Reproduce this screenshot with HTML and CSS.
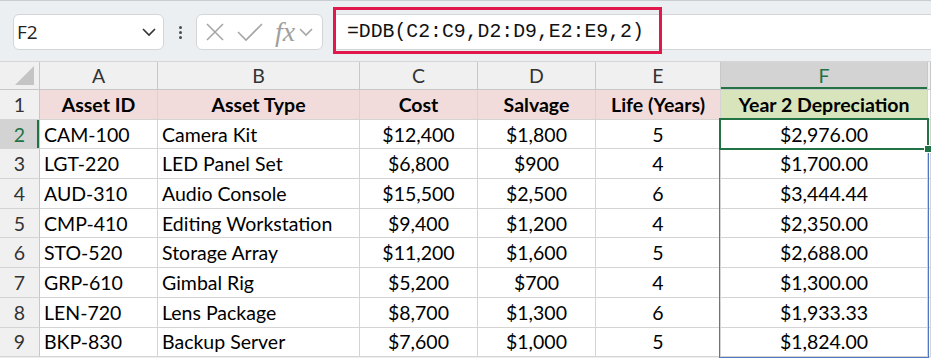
FILE: index.html
```html
<!DOCTYPE html>
<html lang="en">
<head>
  <meta charset="UTF-8">
  <meta name="viewport" content="width=device-width, initial-scale=1.0">
  <title>Asset Depreciation</title>
  <link rel="stylesheet" href="styles.css">
</head>
<body>

<div class="toolbar">
  <div class="name-box">
    <span>F2</span>
    <svg class="chevron" width="16" height="10" viewBox="0 0 16 10"><path d="M2 2 L8 8 L14 2" /></svg>
  </div>
  <div class="dots"><i></i><i></i><i></i></div>
  <div class="fx-box">
    <svg class="icon" width="20" height="20" viewBox="0 0 20 20"><path d="M2 2 L18 18 M18 2 L2 18" /></svg>
    <svg class="icon" width="26" height="20" viewBox="0 0 26 20"><path d="M1 10 L9 18 L25 2" /></svg>
    <span class="fx">fx</span>
    <svg class="icon small" width="14" height="9" viewBox="0 0 14 9"><path d="M1 1 L7 7 L13 1" /></svg>
  </div>
  <div class="formula">
    <span class="formula-text">=DDB(C2:C9,D2:D9,E2:E9,2)</span>
    <div class="highlight"></div>
  </div>
</div>

<div class="sheet">
  <!-- column headers -->
  <div class="hd corner">
    <svg width="20" height="20" viewBox="0 0 20 20"><path d="M0 19 L19 19 L19 0 Z" /></svg>
  </div>
  <div class="hd">A</div>
  <div class="hd">B</div>
  <div class="hd">C</div>
  <div class="hd">D</div>
  <div class="hd">E</div>
  <div class="hd active-col">F</div>
  <div class="hd"></div>

  <!-- row 1 -->
  <div class="rh">1</div>
  <div class="c title">Asset ID</div>
  <div class="c title">Asset Type</div>
  <div class="c title">Cost</div>
  <div class="c title">Salvage</div>
  <div class="c title">Life (Years)</div>
  <div class="c title result">Year 2 Depreciation</div>
  <div class="c"></div>

  <div class="rh active-row">2</div>
  <div class="c l">CAM-100</div>
  <div class="c l">Camera Kit</div>
  <div class="c">$12,400</div>
  <div class="c">$1,800</div>
  <div class="c">5</div>
  <div class="c">$2,976.00</div>
  <div class="c"></div>

  <div class="rh">3</div>
  <div class="c l">LGT-220</div>
  <div class="c l">LED Panel Set</div>
  <div class="c">$6,800</div>
  <div class="c">$900</div>
  <div class="c">4</div>
  <div class="c">$1,700.00</div>
  <div class="c"></div>

  <div class="rh">4</div>
  <div class="c l">AUD-310</div>
  <div class="c l">Audio Console</div>
  <div class="c">$15,500</div>
  <div class="c">$2,500</div>
  <div class="c">6</div>
  <div class="c">$3,444.44</div>
  <div class="c"></div>

  <div class="rh">5</div>
  <div class="c l">CMP-410</div>
  <div class="c l">Editing Workstation</div>
  <div class="c">$9,400</div>
  <div class="c">$1,200</div>
  <div class="c">4</div>
  <div class="c">$2,350.00</div>
  <div class="c"></div>

  <div class="rh">6</div>
  <div class="c l">STO-520</div>
  <div class="c l">Storage Array</div>
  <div class="c">$11,200</div>
  <div class="c">$1,600</div>
  <div class="c">5</div>
  <div class="c">$2,688.00</div>
  <div class="c"></div>

  <div class="rh">7</div>
  <div class="c l">GRP-610</div>
  <div class="c l">Gimbal Rig</div>
  <div class="c">$5,200</div>
  <div class="c">$700</div>
  <div class="c">4</div>
  <div class="c">$1,300.00</div>
  <div class="c"></div>

  <div class="rh">8</div>
  <div class="c l">LEN-720</div>
  <div class="c l">Lens Package</div>
  <div class="c">$8,700</div>
  <div class="c">$1,300</div>
  <div class="c">6</div>
  <div class="c">$1,933.33</div>
  <div class="c"></div>

  <div class="rh">9</div>
  <div class="c l">BKP-830</div>
  <div class="c l">Backup Server</div>
  <div class="c">$7,600</div>
  <div class="c">$1,000</div>
  <div class="c">5</div>
  <div class="c">$1,824.00</div>
  <div class="c"></div>

  <!-- spill range and active cell sit over the grid -->
  <div class="spill-range"></div>
  <div class="active-cell"><span class="fill-handle"></span></div>
</div>

</body>
</html>
```

FILE: styles.css
```css
/* Excel-like sheet */
body {
  margin: 0;
  width: 931px;
  height: 358px;
  overflow: hidden;
  background-color: #eceff2;
  font-family: "Lato", "Liberation Sans", sans-serif;
}

.toolbar {
  display: flex;
  align-items: center;
  height: 58px;
  padding-top: 2px;
  border-top: 1px solid #c9cdd1;
  background-color: #eceff2;
}

.name-box {
  display: flex;
  align-items: center;
  justify-content: space-between;
  box-sizing: border-box;
  width: 151px;
  height: 36px;
  margin-left: 13px;
  padding: 0 6px 0 3px;
  background-color: #fff;
  border: 1px solid #d3d6d9;
  border-radius: 6px;
  font-family: "Open Sans", sans-serif;
  font-size: 19px;
  color: #222;
}

.name-box .chevron path {
  fill: none;
  stroke: #333;
  stroke-width: 1.6;
}

.dots {
  display: flex;
  flex-direction: column;
  gap: 2px;
  margin: 0 14px 0 15px;
}

.dots i {
  display: block;
  width: 3px;
  height: 3px;
  border-radius: 50%;
  background-color: #4a4a4a;
}

.fx-box {
  display: flex;
  align-items: center;
  box-sizing: border-box;
  width: 127px;
  height: 36px;
  padding-left: 8px;
  background-color: #fff;
  border: 1px solid #d3d6d9;
  border-radius: 6px;
}

.fx-box .icon path {
  fill: none;
  stroke: #a6a6a6;
  stroke-width: 1.6;
}

.fx-box .icon + .icon {
  margin-left: 12px;
}

.fx-box .fx {
  margin-left: 12px;
  font-family: "Liberation Serif", serif;
  font-style: italic;
  font-size: 28px;
  color: #a0a0a0;
  line-height: 1;
}

.fx-box .icon.small {
  margin-left: 4px;
}

.formula {
  position: relative;
  display: flex;
  align-items: center;
  flex: 1;
  box-sizing: border-box;
  height: 36px;
  margin-left: 10px;
  padding-left: 14px;
  background-color: #fff;
  border-top: 1px solid #d3d6d9;
  border-bottom: 1px solid #d3d6d9;
}

.formula-text {
  font-family: "Liberation Mono", monospace;
  font-size: 19.8px;
  color: #111;
}

.highlight {
  position: absolute;
  top: -8px;
  left: 0;
  width: 329px;
  height: 47px;
  box-sizing: border-box;
  border: 3px solid #e0184b;
}

.sheet {
  position: relative;
  display: grid;
  grid-template-columns: 40px 118px 202px 118px 118px 125px 207px 1fr;
  grid-template-rows: 28px repeat(9, 29.7px);
  background-color: #fff;
  border-top: 1px solid #d6d6d6;
  font-size: 19.5px;
  color: #000;
}

.sheet > div {
  box-sizing: border-box;
  display: flex;
  align-items: center;
  justify-content: center;
  border-right: 1px solid #d4d4d4;
  border-bottom: 1px solid #d4d4d4;
  white-space: nowrap;
}

.hd {
  background-color: #f0f0f0;
  color: #333;
  border-right-color: #c8c8c8 !important;
  border-bottom-color: #c8c8c8 !important;
}

.corner {
  justify-content: flex-end !important;
  align-items: flex-end !important;
  padding: 0 4px 3px 0;
}

.corner path {
  fill: #c4c4c4;
}

.active-col {
  background-color: #d3d3d3;
  color: #217346;
  box-shadow: inset 0 -2px 0 #217346;
}

.rh {
  background-color: #f0f0f0;
  color: #333;
  border-right-color: #c8c8c8 !important;
}

.active-row {
  background-color: #d3d3d3;
  color: #217346;
  box-shadow: inset -2px 0 0 #217346;
}

.c.l {
  justify-content: flex-start;
  padding-left: 4px;
}

.title {
  background-color: #f2dcdb;
  font-weight: bold;
}

.title.result {
  background-color: #d8e4bc;
}

.sheet > .spill-range {
  position: absolute;
  grid-column: 7 / 8;
  grid-row: 3 / 11;
  top: 0;
  left: -2px;
  right: -1px;
  bottom: -1px;
  border: 1.5px solid #4f77c0;
  border-top: none;
  pointer-events: none;
}

.sheet > .active-cell {
  position: absolute;
  grid-column: 7 / 8;
  grid-row: 3 / 4;
  top: -2px;
  left: -2px;
  right: -1px;
  bottom: -1px;
  border: 2px solid #217346;
}

.fill-handle {
  position: absolute;
  right: -5px;
  bottom: -5px;
  width: 6px;
  height: 6px;
  background-color: #217346;
  border: 1px solid #fff;
}
```
